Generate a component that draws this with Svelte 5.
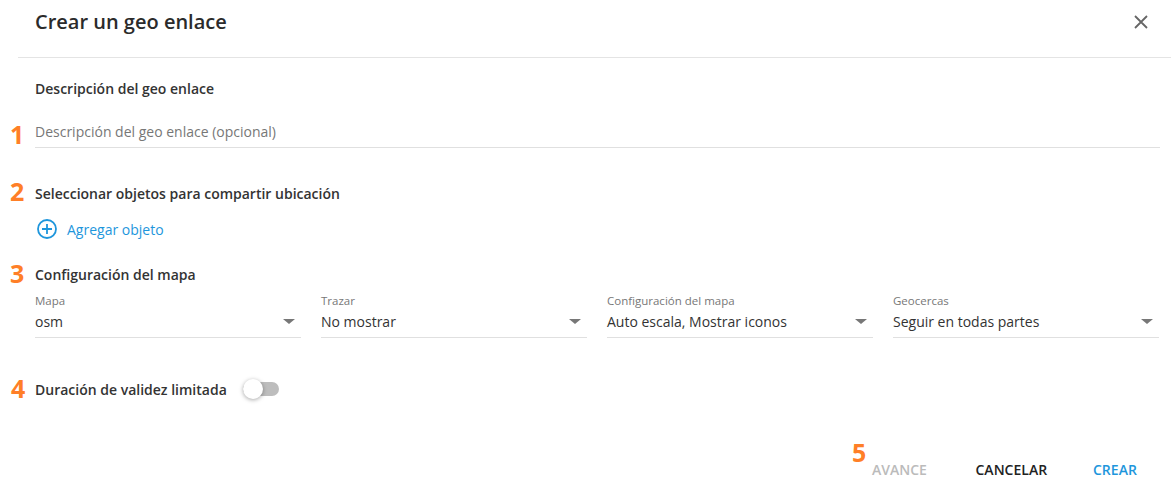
<script>
  const selects = [
    { label: 'Mapa', value: 'osm' },
    { label: 'Trazar', value: 'No mostrar' },
    { label: 'Configuración del mapa', value: 'Auto escala, Mostrar iconos' },
    { label: 'Geocercas', value: 'Seguir en todas partes' }
  ];
</script>

<div class="dialog">
  <header class="head">
    <h1>Crear un geo enlace</h1>
    <svg class="close" viewBox="0 0 14 14" width="14" height="14"><path d="M1 1 L13 13 M13 1 L1 13" stroke="#666" stroke-width="1.8" fill="none" /></svg>
  </header>
  <main class="body">
    <h2 class="desc-title">Descripción del geo enlace</h2>
    <div class="field"><span class="num n1">1</span><span class="ph">Descripción del geo enlace (opcional)</span></div>
    <h2 class="obj-title"><span class="num n2">2</span>Seleccionar objetos para compartir ubicación</h2>
    <div class="add">
      <svg viewBox="0 0 20 20" width="20" height="20"><circle cx="10" cy="10" r="9" stroke="#1e96dc" stroke-width="1.8" fill="none" /><path d="M10 5 V15 M5 10 H15" stroke="#1e96dc" stroke-width="1.8" /></svg>
      <span>Agregar objeto</span>
    </div>
    <h2 class="map-title"><span class="num n3">3</span>Configuración del mapa</h2>
    <div class="selects">
      {#each selects as s}
        <div class="select">
          <div class="lbl">{s.label}</div>
          <div class="val"><span>{s.value}</span><i class="arrow"></i></div>
        </div>
      {/each}
    </div>
    <div class="limit">
      <span class="num n4">4</span>
      <h2>Duración de validez limitada</h2>
      <div class="toggle"><span class="track"></span><span class="thumb"></span></div>
    </div>
  </main>
  <footer class="foot">
    <span class="num n5">5</span>
    <span class="btn off">AVANCE</span>
    <span class="btn dark">CANCELAR</span>
    <span class="btn blue">CREAR</span>
  </footer>
</div>

<style>
  :global(body) { margin: 0; background: #fff; }
  .dialog { width: 1171px; height: 502px; font-family: "Open Sans", sans-serif; color: #333; position: relative; overflow: hidden; }
  .head { height: 57px; margin-left: 18px; border-bottom: 1px solid #e4e4e4; display: flex; align-items: flex-start; justify-content: space-between; padding: 0 23px 0 17px; }
  h1 { margin: 8px 0 0; font-size: 20px; line-height: 27px; font-weight: 600; color: #2b2b2b; }
  .close { margin-top: 15px; }
  h2 { margin: 0; font-size: 14px; line-height: 19px; font-weight: 600; color: #333; position: relative; }
  .body { padding: 0 11px 0 35px; }
  .desc-title { padding-top: 21px; }
  .field { position: relative; height: 25px; margin-top: 24px; border-bottom: 1px solid #e0e0e0; line-height: 19px; }
  .ph { font-size: 14px; color: #777; }
  .num { position: absolute; color: #ff7f27; font-size: 25px; font-weight: 700; line-height: 34px; }
  .n1 { left: -25px; top: -5px; }
  .n2 { left: -25px; top: -10px; }
  .n3 { left: -25px; top: -9px; }
  .n4 { left: -24px; top: -8px; }
  .n5 { left: 12px; top: -25px; }
  .obj-title { margin-top: 36px; }
  .add { display: flex; align-items: center; gap: 10px; margin: 16px 0 0 2px; color: #1e96dc; font-size: 14px; height: 20px; }
  .map-title { margin-top: 26px; }
  .selects { display: flex; gap: 20px; margin-top: 9px; }
  .select { width: 266px; border-bottom: 1px solid #e0e0e0; height: 44px; }
  .lbl { font-size: 11.5px; line-height: 15px; color: #777; }
  .val { display: flex; justify-content: space-between; align-items: center; font-size: 14px; line-height: 19px; margin-top: 4px; padding-right: 6px; }
  .arrow { width: 0; height: 0; border-left: 6px solid transparent; border-right: 6px solid transparent; border-top: 5px solid #777; }
  .limit { display: flex; align-items: center; position: relative; margin-top: 41px; height: 20px; }
  .toggle { position: relative; width: 36px; height: 20px; margin-left: 16px; }
  .track { position: absolute; left: 0; right: 0; top: 3px; height: 14px; border-radius: 7px; background: #bdbdbd; }
  .thumb { position: absolute; left: 0; top: 0; width: 20px; height: 20px; border-radius: 50%; background: #fff; box-shadow: 0 1px 4px rgba(0,0,0,.35); }
  .foot { position: absolute; left: 840px; top: 460px; display: flex; }
  .btn { font-size: 14px; line-height: 19px; font-weight: 600; position: absolute; white-space: nowrap; }
  .off { left: 32px; color: #bbb; }
  .dark { left: 135.5px; color: #222; }
  .blue { left: 253px; color: #1e96dc; }
</style>
